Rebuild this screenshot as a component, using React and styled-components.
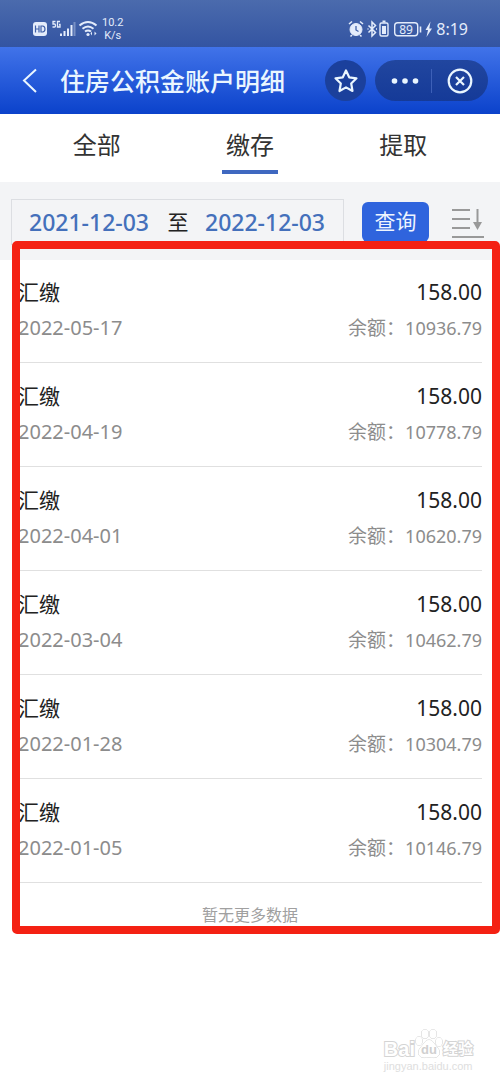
import React from "react";
import styled, { createGlobalStyle } from "styled-components";

const GlobalStyle = createGlobalStyle`
  * {
    box-sizing: border-box;
  }
  body {
    margin: 0;
    background: #fff;
    color: #222;
    font-family: "Noto Sans", "Noto Sans CJK SC", sans-serif;
  }
  button, input {
    margin: 0;
    padding: 0;
    border: 0;
    background: none;
    color: inherit;
    font: inherit;
    cursor: pointer;
  }
  svg {
    display: block;
    flex: none;
  }
`;

const Page = styled.div`
  display: flex;
  flex-direction: column;
  overflow: hidden;
`;

const StatusBarStyled = styled.div`
  display: flex;
  align-items: center;
  justify-content: space-between;
  height: 47px;
  padding: 10px 32px 0;
  background: linear-gradient(#4b6bad, #3354a2);
  color: #e4ecfb;
  .group {
    display: flex;
    align-items: center;
    gap: 4px;
  }
  .speed {
    font-family: Roboto, sans-serif;
    font-size: 11px;
    line-height: 13px;
    text-align: center;
  }
  .time {
    font-size: 16px;
    line-height: 20px;
  }
`;

const HeaderStyled = styled.header`
  display: flex;
  align-items: center;
  height: 67px;
  padding: 0 12px 0 20px;
  background: linear-gradient(#4173e9, #0b42cb);
  color: #eaf6ff;
  h1 {
    flex: 1;
    margin: 0 0 0 20px;
    font-size: 25px;
    line-height: 36px;
    font-weight: 500;
    white-space: nowrap;
  }
`;

const RoundButton = styled.button`
  display: flex;
  align-items: center;
  justify-content: center;
  width: 41px;
  height: 41px;
  margin-right: 9px;
  border-radius: 50%;
  background: #1b409c;
`;

const Capsule = styled.div`
  display: flex;
  align-items: center;
  width: 113px;
  height: 41px;
  border-radius: 21px;
  background: linear-gradient(#21469f, #153a98);
  button {
    display: flex;
    flex: 1;
    align-items: center;
    justify-content: center;
    height: 100%;
  }
  .line {
    width: 1px;
    height: 24px;
    background: #3d60b8;
  }
`;

const TabsStyled = styled.nav`
  display: flex;
  height: 68px;
  padding: 0 20px;
`;

const Tab = styled.button`
  display: flex;
  flex: 1;
  flex-direction: column;
  align-items: center;
  padding-top: 13px;
  color: #333;
  font-size: 24px;
  line-height: 36px;
  &::after {
    content: "";
    width: 56px;
    height: 4px;
    margin-top: 7px;
    background: ${(props) => (props.$active ? "#3f68c0" : "transparent")};
  }
`;

const SearchStyled = styled.form`
  display: flex;
  align-items: flex-start;
  height: 78px;
  padding: 17px 15px 0 11px;
  background: #f3f4f6;
`;

const DateRange = styled.div`
  display: flex;
  flex: 1;
  align-items: center;
  justify-content: space-between;
  height: 46px;
  padding: 0 16px 0 17px;
  border: 1px solid #dcdee2;
  color: #222;
  font-size: 21px;
  line-height: 32px;
`;

const DateInput = styled.input`
  width: 122px;
  color: #4470bb;
  font-size: 23px;
  line-height: 32px;
  font-weight: 500;
`;

const QueryButton = styled.button`
  width: 67px;
  height: 40px;
  margin: 3px 22px 0 18px;
  padding-bottom: 2px;
  border-radius: 6px;
  background: #2f64dd;
  color: #eef5ff;
  font-size: 21px;
  line-height: 32px;
`;

const SortButton = styled.button`
  margin-top: 8px;
`;

const Records = styled.section`
  position: relative;
`;

/* red frame laid over the records */
const Frame = styled.div`
  position: absolute;
  inset: -19px 0 0 12px;
  border: 8px solid #f42113;
  border-radius: 5px;
  pointer-events: none;
`;

const List = styled.ul`
  margin: 0;
  padding: 0 18px;
  list-style: none;
`;

const RecordStyled = styled.li`
  height: 104px;
  padding-top: 17px;
  border-bottom: 1px solid #e0e0e0;
  &:first-child {
    height: 103px;
    padding-top: 16px;
  }
  .line {
    display: flex;
    justify-content: space-between;
    font-size: 21px;
    line-height: 32px;
  }
  .sub {
    margin-top: 4px;
    color: #8c8c8c;
    font-size: 19px;
  }
  .date {
    font-size: 20px;
  }
  .num {
    font-size: 18px;
  }
`;

const Empty = styled.p`
  margin: 0;
  padding: 20px 0 7px;
  color: #a0a0a0;
  font-size: 16px;
  line-height: 24px;
  text-align: center;
`;

const Watermark = styled.footer`
  align-self: flex-end;
  margin: 95px 27px 0 0;
  color: #fff;
  font-family: "Liberation Sans", "Noto Sans CJK SC", sans-serif;
  .logo {
    display: flex;
    align-items: flex-end;
    font-size: 20px;
    line-height: 20px;
    font-weight: 700;
    -webkit-text-stroke: 2px #d4d4d4;
    paint-order: stroke fill;
  }
  .cn {
    font-size: 15px;
  }
  .url {
    color: #dedede;
    font-size: 11px;
    line-height: 14px;
  }
`;

const StatusBar = () => (
  <StatusBarStyled>
    <div className="group">
      <svg width="66" height="18" viewBox="0 0 66 18" fill="none">
        <rect x="1" y="2" width="14" height="14" rx="3" fill="#e4ecfb" />
        <path d="M3.500 5.500v7M7 5.500v7M3.500 9H7M9 6v6h1.500q2.500-.3 2.500-3t-2.500-3z" stroke="#3f60a8" strokeWidth="1.200" />
        <path d="M23.500 1.500H21v2.500h1.500q1 0 1 1.500t-1 1.500H20.500M28 1.500h-2.500v5.500H28V4.500h-1" stroke="#e4ecfb" strokeWidth="1.300" />
        <path d="M29 13.500v2.500M32.500 11v5M36 8.500v7.500M39.500 5v11" stroke="#e4ecfb" strokeWidth="2" />
        <path d="M42.500 2v14" stroke="#7890c4" strokeWidth="2" />
        <g stroke="#e4ecfb" strokeWidth="2">
          <path d="M47.500 5.500q8.500-7 17 0M50.500 8.700q5.500-4.500 11 0M53 11.500q3-2.200 6 0" />
        </g>
        <circle cx="56" cy="14.500" r="1.600" fill="#e4ecfb" />
        <path d="M60 11.500l-1.500 2 1.500 2zM62.500 11.500l2 2-2 2z" fill="#e4ecfb" />
      </svg>
      <div className="speed">
        10.2
        <br />
        K/s
      </div>
    </div>
    <div className="group">
      <svg width="84" height="18" viewBox="0 0 84 18" fill="none" stroke="#e4ecfb">
        <circle cx="8" cy="9.500" r="6" fill="#e4ecfb" />
        <path d="M1 4l3-2.500M15 4l-3-2.500M4 15l-1.500 1.500M12 15l1.500 1.500" strokeWidth="1.600" />
        <path d="M8 6v4l2.500 1.500" stroke="#3f60a8" strokeWidth="1.300" />
        <path d="M20.500 5.500l7 7-3.500 3.500V2l3.500 3.500-7 7" strokeWidth="1.500" />
        <path d="M19.500 9h1M28 9h1" strokeWidth="1.500" />
        <path d="M34.500 1.500h3" strokeWidth="2" />
        <rect x="32" y="3" width="8" height="13" rx="1.500" strokeWidth="1.400" />
        <rect x="34" y="6" width="4" height="8" fill="#e4ecfb" stroke="none" />
        <rect x="46.700" y="2.700" width="23" height="13" rx="3" strokeWidth="1.400" />
        <path d="M72.500 6.500v6" strokeWidth="1.600" />
        <text x="58" y="13.500" textAnchor="middle" fill="#e4ecfb" stroke="none" fontSize="12" fontFamily="Noto Sans, sans-serif">
          89
        </text>
        <path d="M82.500 1.500l-5 8.500h2.500L78.500 17l5.500-8.500h-2.700z" fill="#e4ecfb" stroke="none" />
      </svg>
      <span className="time">8:19</span>
    </div>
  </StatusBarStyled>
);

const Header = () => (
  <HeaderStyled>
    <button type="button" aria-label="返回">
      <svg width="20" height="26" viewBox="0 0 20 26" fill="none" stroke="#eaf6ff" strokeWidth="2">
        <path d="M16 1.500L4 12.500l12 11.500" />
      </svg>
    </button>
    <h1>住房公积金账户明细</h1>
    <RoundButton type="button" aria-label="收藏">
      <svg width="26" height="26" viewBox="0 0 26 26" fill="none" stroke="#eaf6ff" strokeWidth="2.200" strokeLinejoin="round">
        <path d="M13 2.500l3.200 6.800 7.300 1-5.300 5.200 1.300 7.500L13 19.400 6.500 23l1.300-7.500L2.500 10.300l7.300-1z" />
      </svg>
    </RoundButton>
    <Capsule>
      <button type="button" aria-label="更多">
        <svg width="34" height="8" viewBox="0 0 34 8" fill="#eaf6ff">
          <circle cx="8.500" cy="4" r="2.800" />
          <circle cx="19" cy="4" r="2.800" />
          <circle cx="29.500" cy="4" r="2.800" />
        </svg>
      </button>
      <span className="line" />
      <button type="button" aria-label="关闭">
        <svg width="26" height="26" viewBox="0 0 26 26" fill="none" stroke="#eaf6ff" strokeWidth="2.200">
          <circle cx="13" cy="13" r="11.300" />
          <path d="M9 9l8 8M17 9l-8 8" />
        </svg>
      </button>
    </Capsule>
  </HeaderStyled>
);

const Search = () => (
  <SearchStyled onSubmit={(e) => e.preventDefault()}>
    <DateRange>
      <DateInput aria-label="开始日期" defaultValue="2021-12-03" />
      <span>至</span>
      <DateInput aria-label="结束日期" defaultValue="2022-12-03" />
    </DateRange>
    <QueryButton type="submit">查询</QueryButton>
    <SortButton type="button" aria-label="排序">
      <svg width="34" height="32" viewBox="0 0 34 32" fill="none" stroke="#999" strokeWidth="2">
        <path d="M1 3h18M1 12h18M1 21h18M1 30h32M26.500 2v15" />
        <path d="M22 15h9l-4.500 8z" fill="#999" stroke="none" />
      </svg>
    </SortButton>
  </SearchStyled>
);

const Record = ({ date, amount = "158.00", balance }) => (
  <RecordStyled>
    <div className="line">
      <span>汇缴</span>
      <span>{amount}</span>
    </div>
    <div className="line sub">
      <span className="date">{date}</span>
      <span>
        余额：<span className="num">{balance}</span>
      </span>
    </div>
  </RecordStyled>
);

const tabs = ["全部", "缴存", "提取"];

const records = [
  { date: "2022-05-17", balance: "10936.79" },
  { date: "2022-04-19", balance: "10778.79" },
  { date: "2022-04-01", balance: "10620.79" },
  { date: "2022-03-04", balance: "10462.79" },
  { date: "2022-01-28", balance: "10304.79" },
  { date: "2022-01-05", balance: "10146.79" },
];

const App = () => {
  const [active, setActive] = React.useState("缴存");
  return (
    <Page>
      <GlobalStyle />
      <StatusBar />
      <Header />
      <TabsStyled>
        {tabs.map((tab) => (
          <Tab key={tab} type="button" $active={tab === active} onClick={() => setActive(tab)}>
            {tab}
          </Tab>
        ))}
      </TabsStyled>
      <Search />
      <Records>
        <List>
          {records.map((item) => (
            <Record key={item.date} {...item} />
          ))}
        </List>
        <Empty>暂无更多数据</Empty>
        <Frame />
      </Records>
      <Watermark>
        <div className="logo">
          <span>Bai</span>
          <svg width="28" height="30" viewBox="0 0 28 30" fill="#fff" stroke="#d0d0d0">
            <ellipse cx="4" cy="12" rx="3.200" ry="4.200" />
            <ellipse cx="10" cy="5" rx="3.500" ry="4.400" />
            <ellipse cx="18" cy="5" rx="3.500" ry="4.400" />
            <ellipse cx="24" cy="13" rx="3.200" ry="4.200" />
            <path d="M14 11c4 0 5 4 8 7 4 4 3 10-2 10.500-3 .3-4-.5-6-.5s-3 .8-6 .5C3 28 2 22 6 18c3-3 4-7 8-7z" />
            <text x="14" y="25" textAnchor="middle" fontSize="13" fontWeight="700" fontFamily="Liberation Sans, sans-serif" fill="#d0d0d0" stroke="none">
              du
            </text>
          </svg>
          <span className="cn">经验</span>
        </div>
        <div className="url">jingyan.baidu.com</div>
      </Watermark>
    </Page>
  );
};

export default App;
